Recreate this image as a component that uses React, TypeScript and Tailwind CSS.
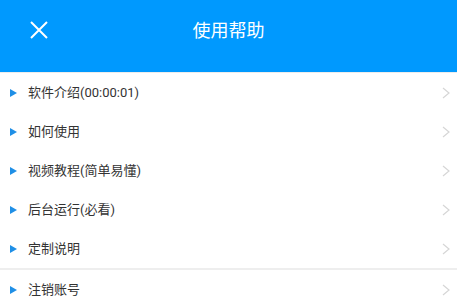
const items = [
  "软件介绍(00:00:01)",
  "如何使用",
  "视频教程(简单易懂)",
  "后台运行(必看)",
  "定制说明",
];

function Row({ label }: { label: string }) {
  return (
    <div className="flex h-[39px] items-center pl-[10px] pr-[6px]">
      <svg width="7" height="8" viewBox="0 0 7 8" className="shrink-0">
        <path d="M0 0 L7 4 L0 8 Z" fill="#1f8fe6" />
      </svg>
      <span className="ml-[11px] flex-1 text-[13px] leading-none text-[#333]">{label}</span>
      <svg width="10" height="12" viewBox="0 0 10 12" className="shrink-0">
        <path d="M2 1 L8 6 L2 11" fill="none" stroke="#d6d6d6" strokeWidth="1.2" />
      </svg>
    </div>
  );
}

export default function App() {
  return (
    <div
      className="h-[307px] w-[457px] overflow-hidden bg-white"
      style={{ fontFamily: 'Roboto, "Noto Sans CJK SC", sans-serif' }}
    >
      <div className="flex h-[72px] items-center bg-[#0099fe] px-[30px]">
        <svg width="18" height="18" viewBox="0 0 18 18" className="shrink-0 -mt-[12px]">
          <path d="M1 1 L17 17 M17 1 L1 17" stroke="#fff" strokeWidth="2" />
        </svg>
        <div className="-mt-[10px] flex-1 pr-[18px] text-center text-[18px] leading-none text-white">
          使用帮助
        </div>
      </div>
      <div className="h-[1px] bg-[#ececec]" />
      {items.map((t) => (
        <Row key={t} label={t} />
      ))}
      <div className="h-[2px] bg-[#eeeeee]" />
      <Row label="注销账号" />
    </div>
  );
}
